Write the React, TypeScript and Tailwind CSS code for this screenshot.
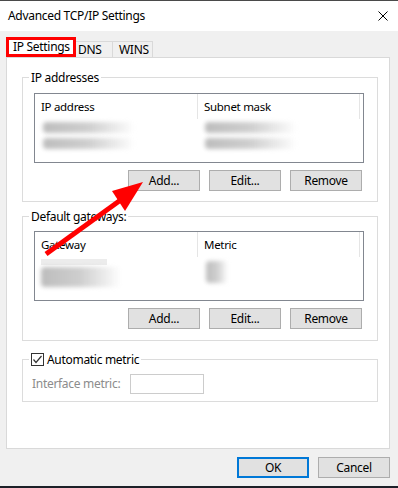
import type { ReactNode } from 'react'

const ui = "font-['Noto_Sans',sans-serif] text-[12px] tracking-[-0.3px] text-black"

function Btn({ children, primary }: { children: ReactNode; primary?: boolean }) {
  return (
    <button
      className={
        primary
          ? 'w-[72px] h-[21px] flex items-center justify-center bg-[#e1e1e1] border-2 border-[#0078d7] leading-none'
          : 'w-[72px] h-[21px] flex items-center justify-center bg-[#e1e1e1] border border-[#adadad] leading-none'
      }
    >
      {children}
    </button>
  )
}

function Blur({ w, h, ml }: { w: number; h: number; ml: number }) {
  return (
    <div
      className="bg-linear-to-r from-[#bdbdbd] via-[#cfcfcf] to-transparent blur-[2px] rounded-sm"
      style={{ width: w, height: h, marginLeft: ml }}
    />
  )
}

function ListView({ cols, rows }: { cols: [string, string]; rows: ReactNode }) {
  return (
    <div className="ml-[11px] w-[330px] h-[70px] border border-[#828790] bg-white overflow-hidden">
      <div className="flex h-[25px] items-center">
        <div className="w-[163px] h-full flex items-center pl-[6px] border-r border-[#e5e5e5] text-[11.5px]">
          {cols[0]}
        </div>
        <div className="flex-1 h-full flex items-center pl-[6px] text-[11.5px]">
          <span>{cols[1]}</span>
          <div className="ml-auto mr-[3px] w-px h-full bg-[#e5e5e5]" />
        </div>
      </div>
      {rows}
    </div>
  )
}

function Group({ label, children, h }: { label: ReactNode; children: ReactNode; h: number }) {
  return (
    <div className="w-[356px] border border-[#dcdcdc]" style={{ height: h }}>
      <div className="-mt-[8px] ml-[6px] h-[15px] w-fit px-[2px] bg-white flex items-center leading-none whitespace-nowrap">
        {label}
      </div>
      {children}
    </div>
  )
}

function ButtonRow() {
  return (
    <div className="mt-[7px] pr-[15px] flex justify-end gap-[9px]">
      <Btn>Add...</Btn>
      <Btn>Edit...</Btn>
      <Btn>Remove</Btn>
    </div>
  )
}

export default function App() {
  return (
    <div className={`relative w-[398px] h-[488px] overflow-hidden flex flex-col bg-[#f0f0f0] ${ui}`}>
      <div className="h-px bg-[#4a4a4a]" />
      {/* title bar */}
      <div className="h-[30px] bg-white flex items-center justify-between pl-[8px] pr-[10px]">
        <span className="text-[12px]">Advanced TCP/IP Settings</span>
        <svg width="10" height="10" viewBox="0 0 10 10" className="-mt-[1px]">
          <path d="M0.5 0.5 L9.5 9.5 M9.5 0.5 L0.5 9.5" stroke="#000" strokeWidth="1" />
        </svg>
      </div>

      <div className="flex-1 px-[6px] pt-[6px]">
        {/* tabs */}
        <div className="flex items-end h-[20px] whitespace-nowrap">
          <div className="w-[70px] h-[20px] border-[3px] border-[#ff0000] bg-white flex items-center pl-[4px] leading-none">
            IP Settings
          </div>
          <div className="w-[37px] h-[16px] border-t border-r border-[#d9d9d9] flex items-center pl-[2px] leading-none">
            DNS
          </div>
          <div className="w-[40px] h-[16px] border-t border-r border-[#d9d9d9] flex items-center pl-[6px] leading-none">
            WINS
          </div>
        </div>

        {/* tab page */}
        <div className="w-[384px] h-[392px] border border-[#d9d9d9] bg-white pl-[15px] pt-[19px]">
          <Group label="IP addresses" h={125}>
            <div className="mt-[8px]">
              <ListView
                cols={['IP address', 'Subnet mask']}
                rows={
                  <div className="pt-[3px] flex flex-col gap-[5px]">
                    <div className="flex">
                      <Blur w={92} h={11} ml={8} />
                      <div className="ml-[70px]">
                        <Blur w={92} h={11} ml={0} />
                      </div>
                    </div>
                    <div className="flex">
                      <Blur w={92} h={11} ml={8} />
                      <div className="ml-[70px]">
                        <Blur w={92} h={11} ml={0} />
                      </div>
                    </div>
                  </div>
                }
              />
            </div>
            <ButtonRow />
          </Group>

          <div className="mt-[14px]">
            <Group label="Default gateways:" h={125}>
              <div className="mt-[7px]">
                <ListView
                  cols={['Gateway', 'Metric']}
                  rows={
                    <div className="pt-[2px] flex">
                      <div className="flex flex-col gap-[2px]">
                        <div className="ml-[6px] w-[66px] h-[6px] bg-[#ececec]" />
                        <Blur w={80} h={20} ml={6} />
                      </div>
                      <div className="ml-[85px] mt-[2px]">
                        <Blur w={22} h={22} ml={0} />
                      </div>
                    </div>
                  }
                />
              </div>
              <ButtonRow />
            </Group>
          </div>

          <div className="mt-[18px]">
            <Group
              h={43}
              label={
                <div className="flex items-center gap-[3px]">
                  <div className="w-[13px] h-[13px] border border-[#333333] bg-white flex items-center justify-center">
                    <svg width="11" height="11" viewBox="0 0 11 11">
                      <path d="M1.5 5.5 L4 8.5 L9.5 2" stroke="#333" strokeWidth="1.2" fill="none" />
                    </svg>
                  </div>
                  <span>Automatic metric</span>
                </div>
              }
            >
              <div className="mt-[7px] flex items-center ml-[9px]">
                <span className="w-[98px] text-[#8c8c8c]">Interface metric:</span>
                <div className="w-[74px] h-[20px] border border-[#cccccc] bg-white" />
              </div>
            </Group>
          </div>
        </div>

        {/* dialog buttons */}
        <div className="mt-[8px] pr-[2px] flex justify-end gap-[9px]">
          <Btn primary>OK</Btn>
          <Btn>Cancel</Btn>
        </div>
      </div>
      <div className="h-[2px] bg-[#1c2028]" />

      {/* red annotation arrow */}
      <svg className="absolute left-0 top-0 pointer-events-none" width="398" height="488" viewBox="0 0 398 488">
        <line x1="46" y1="254" x2="122" y2="199" stroke="#ff0000" strokeWidth="5" />
        <polygon points="143,182 112,191 125,211" fill="#ff0000" />
      </svg>
    </div>
  )
}
